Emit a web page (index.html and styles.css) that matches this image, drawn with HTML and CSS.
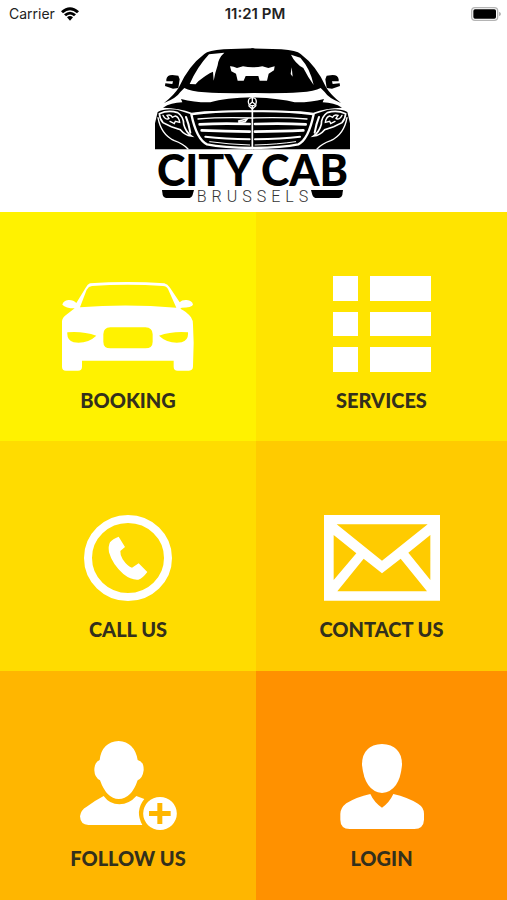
FILE: index.html
```html
<!DOCTYPE html>
<html lang="en">
<head>
<meta charset="utf-8">
<meta name="viewport" content="width=device-width, initial-scale=1">
<title>City Cab Brussels</title>
<link rel="stylesheet" href="styles.css">
</head>
<body>
<div class="status">
  <div class="carrier">
    <span>Carrier</span>
    <svg class="wifi" viewBox="0 0 54 42" aria-hidden="true">
      <path d="M0 13Q27-11 54 13L48 19Q27 0 6 19Z"/>
      <path d="M9 22Q27 6 45 22L39 28Q27 17 15 28Z"/>
      <path d="M18 31Q27 23 36 31L27 41Z"/>
    </svg>
  </div>
  <time class="clock">11:21 PM</time>
  <svg class="battery" viewBox="0 0 90 42" aria-hidden="true">
    <rect x="2" y="2" width="78" height="38" rx="10" fill="#fff" stroke="#b4b4b4" stroke-width="4"/>
    <rect x="7" y="7" width="68" height="28" rx="5"/>
    <path d="M84 14q6 3 6 7t-6 7z" fill="#b4b4b4"/>
  </svg>
</div>
<header class="brand">
  <svg class="brand-car" viewBox="27 24 591 306" aria-hidden="true">
    <defs>
      <g id="half">
        <!-- mirror -->
        <path d="M64 118Q66 105 82 105L100 107 104 118 100 144 84 146 60 138 61 130 82 132 84 124 64 124Z"/>
        <!-- cabin -->
        <path d="M101 143Q130 78 178 42 190 31 236 28L326 25V159Q240 161 180 157 136 154 118 144L106 156Q95 174 57 189 88 164 101 143Z"/>
        <!-- hood -->
        <path d="M54 203Q78 188 112 187L108 177Q150 188 196 187 240 174 326 172V212Q250 211 178 214L140 218Q104 205 54 203Z"/>
        <!-- bumper and grille block -->
        <path d="M30 328V250L38 216Q58 204 96 209L135 222Q220 213 326 216V328Z"/>
      </g>
    </defs>
    <use href="#half"/>
    <use href="#half" transform="translate(645 0) scale(-1 1)"/>
    <g fill="#fff">
      <path d="M192 43L238 38Q220 54 218 76L211 99 206 122 204 95Q185 103 160 124L152 133 134 132Q156 82 192 43Z"/>
      <path d="M255 79Q263 78 276 84L294 79Q322 85 352 79L370 84 389 79 387 91 371 101 366 122H344L340 108H302L296 122H278L273 101 259 94Z"/>
      <path d="M438 44L466 53Q496 86 506 135 488 110 475 84 450 70 438 44Z"/>
      <path d="M440 82L443 110 437 102Z"/>
    </g>
    <g fill="none" stroke="#fff" stroke-linecap="round">
      <g id="lamp-left">
        <path d="M43 221Q70 209 98 218 116 230 116 253 122 276 139 288 120 286 106 269L79 260 54 248Q44 237 43 221Z" stroke-width="5"/>
        <path d="M54 226Q62 242 72 235L66 226Q78 222 82 232L91 228Q102 231 104 247L91 244 88 251 75 244" stroke-width="4"/>
        <path d="M39 233Q48 284 88 302 114 311 129 327" stroke-width="4"/>
        <path d="M123 231Q131 250 136 278" stroke-width="6"/>
      </g>
      <use href="#lamp-left" transform="translate(645 0) scale(-1 1)"/>
      <path d="M139 223Q155 299 186 313 234 323 322 324 410 323 460 313 490 299 506 223" stroke-width="7"/>
      <path d="M142 223Q220 212 322 214 425 212 503 223" stroke-width="6"/>
      <path d="M159 237Q230 231 322 234 414 231 486 237" stroke-width="4"/>
      <path d="M164 253Q230 249 314 252M330 252Q410 249 482 253" stroke-width="8"/>
      <path d="M170 271Q240 274 314 275M330 275Q410 274 475 271" stroke-width="8"/>
      <path d="M181 290Q240 296 314 298M330 298Q410 296 465 290" stroke-width="6"/>
      <path d="M194 305Q250 313 314 315M330 315Q400 313 452 305" stroke-width="3"/>
      <path d="M281 243L306 237 300 245 282 248" stroke-width="5"/>
      <path d="M322 200V326" stroke-width="5"/>
      <circle cx="322" cy="185" r="12" stroke-width="4"/>
      <path d="M322 174V186L312 195M322 186L333 195M312 198L322 207 332 198" stroke-width="4"/>
    </g>
  </svg>
  <h1 class="brand-name">CITY CAB</h1>
  <div class="brand-city">
    <svg class="tyre" viewBox="0 0 96 24" aria-hidden="true"><path d="M0 0H96L92 14Q89 24 78 24H18Q4 24 2 14Z"/></svg>
    <span>BRUSSELS</span>
    <svg class="tyre" viewBox="0 0 96 24" aria-hidden="true"><path d="M0 0H96L94 14Q92 24 78 24H18Q7 24 4 14Z"/></svg>
  </div>
</header>
<main class="tiles">
  <a class="tile booking" href="#booking">
    <span class="icon"><svg width="132" height="90" viewBox="37 33 396 270" aria-hidden="true">
      <path fill-rule="evenodd" d="M121 37Q233 29 344 37 354 39 361 50L390 94Q397 86 411 87 428 89 430 101 426 110 396 110L392 113Q412 122 424 139 430 147 430 162L432 215 430 286Q430 299 418 299H384Q372 299 372 287V269H97V287Q97 299 85 299H49Q37 299 37 287V150Q39 138 52 130L75 112Q48 112 38 101 41 89 56 87 71 86 80 96L108 50Q114 39 121 37ZM127 45Q117 46 111 56L91 109Q230 97 380 110L355 54Q350 45 340 45 233 38 127 45ZM182 169Q161 170 161 190V212Q161 232 182 232H287Q309 232 309 212V190Q309 170 287 169ZM53 184Q51 207 72 214 112 220 140 194 100 180 53 184ZM415 184Q417 207 396 214 356 220 328 194 368 180 415 184Z"/>
    </svg></span>
    <span class="label">BOOKING</span>
  </a>
  <a class="tile services" href="#services">
    <span class="icon"><svg width="98" height="96" viewBox="0 0 98 96" aria-hidden="true">
      <path d="M0 0H25V25H0ZM37 0H98V25H37ZM0 36H25V60H0ZM37 36H98V60H37ZM0 71H25V96H0ZM37 71H98V96H37Z"/>
    </svg></span>
    <span class="label">SERVICES</span>
  </a>
  <a class="tile call" href="#call">
    <span class="icon"><svg width="88" height="86" viewBox="72 43 264 258" aria-hidden="true">
      <ellipse cx="204" cy="172" rx="120" ry="117" fill="none" stroke="#fff" stroke-width="24"/>
      <path d="M176 108L195 139 181 151Q180 162 188 176 203 198 216 201L236 188 262 214Q248 233 235 237 214 239 190 220 157 191 147 155 144 137 150 125 158 115 176 108Z"/>
    </svg></span>
    <span class="label">CALL US</span>
  </a>
  <a class="tile contact" href="#contact">
    <span class="icon"><svg width="116" height="86" viewBox="39 41 348 258" aria-hidden="true">
      <path fill-rule="evenodd" d="M39 41H387V298H39ZM77 69L213 178 350 69ZM68 101V236L136 156ZM358 101L292 154 358 236ZM158 172L79 270H348L269 172 213 216Z"/>
    </svg></span>
    <span class="label">CONTACT US</span>
  </a>
  <a class="tile follow" href="#follow">
    <span class="icon"><svg width="97" height="89" viewBox="58 39 291 267" aria-hidden="true">
      <path d="M174 39Q222 42 231 96 250 100 249 127 246 151 231 157 212 213 174 213 138 213 118 157 102 149 101 127 101 103 117 96 123 42 174 39Z"/>
      <path d="M129 204Q147 229 176 229 206 228 227 204L251 213Q222 249 245 291H83Q59 290 58 265 60 246 78 236 104 217 129 204Z"/>
      <path fill-rule="evenodd" d="M298 207A50 49 0 1 1 298 306 50 49 0 1 1 298 207ZM290 225V249H265V264H290V288H305V264H330V249H305V225Z"/>
    </svg></span>
    <span class="label">FOLLOW US</span>
  </a>
  <a class="tile login" href="#login">
    <span class="icon"><svg width="84" height="86" viewBox="57 41 252 258" aria-hidden="true">
      <path d="M183 41Q243 44 243 104 236 183 183 188 131 183 123 104 123 44 183 41Z"/>
      <path d="M148 191Q160 217 183 232 205 217 217 191 260 201 291 220 309 231 309 250V268Q308 295 280 296H86Q58 295 58 268V250Q59 232 76 219 106 200 148 191Z"/>
    </svg></span>
    <span class="label">LOGIN</span>
  </a>
</main>
</body>
</html>
```
FILE: styles.css
```css
* {
  box-sizing: border-box;
}

body {
  margin: 0;
  min-height: 100vh;
  display: flex;
  flex-direction: column;
  background: #fff;
  color: #000;
  font-family: Inter, "Liberation Sans", sans-serif;
}

.status {
  display: grid;
  grid-template-columns: 1fr auto 1fr;
  align-items: center;
  height: 28px;
  padding: 0 6px 0 9px;
  font-size: 14px;
  line-height: 20px;
  color: #222;
}

.carrier {
  display: flex;
  align-items: center;
  gap: 6px;
}

.wifi {
  width: 18px;
  height: 14px;
}

.clock {
  font-size: 15px;
  font-weight: 600;
}

.battery {
  width: 30px;
  height: 14px;
  justify-self: end;
}

.brand {
  display: flex;
  flex-direction: column;
  align-items: center;
  padding: 20px 2px 8px 0;
}

.brand-car {
  width: 197px;
  height: 102px;
}

.brand-name {
  margin: 0;
  font-family: Lato, "Open Sans", sans-serif;
  font-size: 43px;
  font-weight: 900;
  line-height: 40px;
}

.brand-city {
  display: flex;
  align-items: flex-start;
  gap: 3px;
  font-family: "Liberation Sans", sans-serif;
  font-size: 16px;
  line-height: 14px;
  color: #333;
}

.brand-city span {
  font-family: Roboto, "Liberation Sans", sans-serif;
  font-weight: 300;
  letter-spacing: 5px;
  margin-right: -5px;
}

.tyre {
  width: 32px;
  height: 8px;
}

.tiles {
  flex: 1;
  display: grid;
  grid-template-columns: 256fr 251fr;
  grid-auto-rows: 1fr;
}

.tile {
  display: flex;
  flex-direction: column;
  align-items: center;
  justify-content: center;
  gap: 16px;
  padding-top: 32px;
  color: #33301c;
  text-decoration: none;
}

.icon {
  display: flex;
  align-items: flex-end;
  height: 98px;
}

.icon svg {
  fill: #fff;
}

.label {
  font-family: Lato, "Open Sans", sans-serif;
  font-size: 20px;
  font-weight: 900;
  line-height: 24px;
}

.booking {
  background: #fff200;
}

.services {
  background: #ffe400;
}

.call {
  background: #ffdc00;
}

.contact {
  background: #ffcb00;
}

.follow {
  background: #ffb600;
}

.login {
  background: #ff9100;
}
```
